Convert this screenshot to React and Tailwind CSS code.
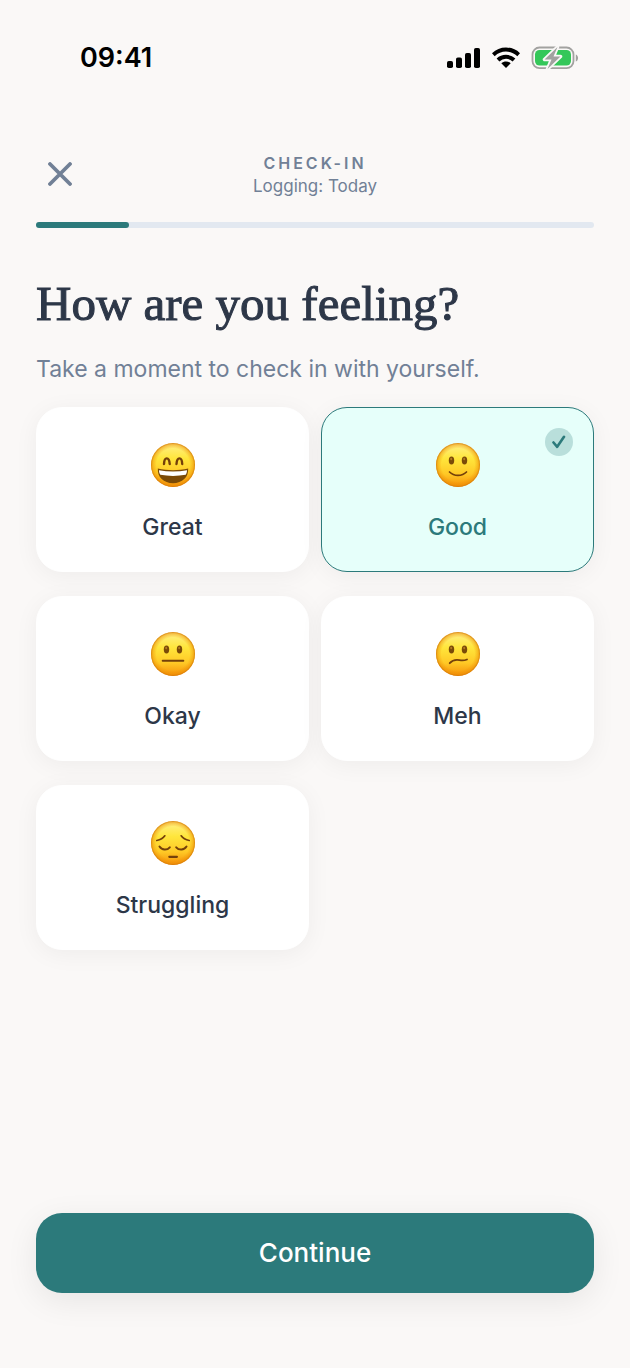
import React, { useState } from 'react';

const moods = [
    { id: 'great', label: 'Great' },
    { id: 'good', label: 'Good' },
    { id: 'okay', label: 'Okay' },
    { id: 'meh', label: 'Meh' },
    { id: 'struggling', label: 'Struggling' },
];

const OpenEyes = () => (
    <>
        <ellipse cx="15.5" cy="17.500" rx="2.700" ry="4" fill="#7a4a08" />
        <ellipse cx="28.5" cy="17.500" rx="2.700" ry="4" fill="#7a4a08" />
        <ellipse cx="15.2" cy="16" rx="1" ry="1.3" fill="#b27a20" />
        <ellipse cx="28.2" cy="16" rx="1" ry="1.3" fill="#b27a20" />
    </>
);

const FaceFeatures = ({ mood }) => {
    const line = { fill: 'none', stroke: '#74400a', strokeLinecap: 'round', strokeLinejoin: 'round' };

    switch (mood) {
        case 'great':
            return (
                <>
                    <path d="M13 21c.3-7.500 5.200-7.500 5.700 0M25.500 21c.5-7.500 5.400-7.500 5.700 0" strokeWidth="2.400" {...line} />
                    <path d="M6.800 25.500c9.500 2.200 21 2.200 30.400 0 .6 8.500-6 14.700-15.200 14.700S6.200 34 6.800 25.500z" fill="#7b4a06" />
                    <path d="M8 27.200c9 1.700 19 1.700 28 0 0 1.700-.5 3.300-1.300 4.600-8 1.500-17.400 1.500-25.400 0-.8-1.300-1.300-2.900-1.300-4.600z" fill="#fff" />
                </>
            );
        case 'good':
            return (
                <>
                    <OpenEyes />
                    <path d="M13.500 29c4.500 4.500 12.500 4.500 17 0" strokeWidth="1.700" {...line} />
                </>
            );
        case 'okay':
            return (
                <>
                    <OpenEyes />
                    <path d="M11.700 28.800h20.600" strokeWidth="2" {...line} />
                </>
            );
        case 'meh':
            return (
                <>
                    <OpenEyes />
                    <path d="M13.700 31.200c3-3.400 6.500-3.600 9.800-3 3 .5 5.300.3 7.500-.7" strokeWidth="1.800" {...line} />
                </>
            );
        default:
            return (
                <>
                    <path d="M5.800 19.500c3.700-.7 6.500-2.500 8-4.700M38.200 19.500c-3.700-.7-6.500-2.500-8-4.700" strokeWidth="1.700" {...line} />
                    <path d="M8.500 25.500c2.500 3.800 7.500 4 10.300.8M35.500 25.500c-2.500 3.800-7.500 4-10.300.8" strokeWidth="2" {...line} />
                    <path d="M18.300 35.800h7.600" strokeWidth="2.200" {...line} />
                </>
            );
    }
};

const Face = ({ mood }) => (
    <svg viewBox="0 0 44 44" className="h-11 w-11" aria-hidden="true">
        <defs>
            <linearGradient id={`${mood}-skin`} x1="0" y1="0" x2="0" y2="1">
                <stop offset="0" stopColor="#fff08a" />
                <stop offset="0.35" stopColor="#ffe63c" />
                <stop offset="0.7" stopColor="#ffc926" />
                <stop offset="1" stopColor="#f58f08" />
            </linearGradient>
            <radialGradient id={`${mood}-rim`}>
                <stop offset="0.75" stopColor="#f08a00" stopOpacity="0" />
                <stop offset="0.92" stopColor="#ea8c05" stopOpacity="0.45" />
                <stop offset="1" stopColor="#d07205" stopOpacity="0.9" />
            </radialGradient>
        </defs>
        <circle cx="22" cy="22" r="22" fill={`url(#${mood}-skin)`} />
        <circle cx="22" cy="22" r="22" fill={`url(#${mood}-rim)`} />
        <FaceFeatures mood={mood} />
    </svg>
);

const StatusBar = () => (
    <div className="flex h-[116px] items-center justify-between pr-[51px] pl-20">
        <span className="text-[27px] leading-8 font-semibold text-black">09:41</span>
        <div className="flex items-center gap-[11px]">
            <svg viewBox="0 0 34 22" className="h-[22px] w-[34px]" aria-hidden="true">
                <rect x="0" y="14" width="6" height="7" rx="1.800" />
                <rect x="9" y="10.500" width="6" height="10.500" rx="1.800" />
                <rect x="18" y="6" width="6" height="15" rx="1.800" />
                <rect x="27" y="1" width="6" height="20" rx="1.800" />
            </svg>
            <svg viewBox="0 0 28 22" className="h-[22px] w-7" aria-hidden="true">
                <g fill="none" stroke="#000" strokeWidth="4">
                    <path d="M1.300 7.700c7.200-6.900 18.200-6.900 25.400 0" />
                    <path d="M6 13c4.500-4.300 11.500-4.300 16 0" />
                </g>
                <path d="M14 21l-4.700-4.700c2.700-2.500 6.700-2.500 9.400 0z" />
            </svg>
            <svg viewBox="0 0 48 24" className="h-6 w-12" aria-hidden="true">
                <rect x="1.500" y="1.500" width="41" height="20.600" rx="7" fill="none" stroke="#a2a2a0" strokeWidth="1.800" />
                <path d="M44.800 8.500c3 1 3 6 0 7z" fill="#a2a2a0" />
                <rect x="4" y="4" width="36" height="15.600" rx="4.500" fill="#34c759" />
                <path d="M26.500 1L13.500 13.500h7L16.500 23l13-12.500h-7z" fill="#a2a2a0" stroke="#faf8f7" strokeWidth="3.500" strokeLinejoin="round" paintOrder="stroke" />
            </svg>
        </div>
    </div>
);

const MoodCard = ({ mood, selected, onSelect }) => (
    <label
        className={`relative flex cursor-pointer flex-col items-center gap-6 rounded-[26px] border pt-[35px] pb-7 shadow-[0_4px_24px_rgba(0,0,0,0.05)] has-focus-visible:ring-2 has-focus-visible:ring-[#2c7a7b] ${
            selected ? 'border-[#2c7a7b] bg-[#e6fffa] text-[#2c7a7b]' : 'border-white bg-white text-[#2d3748]'
        }`}
    >
        <input
            type="radio"
            name="mood"
            value={mood.id}
            checked={selected}
            onChange={() => onSelect(mood.id)}
            className="sr-only"
        />
        <Face mood={mood.id} />
        <span className="text-[23px] leading-8 font-medium">{mood.label}</span>
        {selected && (
            <span className="absolute top-5 right-5 flex h-7 w-7 items-center justify-center rounded-full bg-[#b9dfdb]">
                <svg viewBox="0 0 14 14" className="h-3.5 w-3.5" fill="none" stroke="#2c7a7b" strokeWidth="2.600" strokeLinecap="round" strokeLinejoin="round">
                    <path d="M1.500 7.500l3.700 4.300L12 1.800" />
                </svg>
            </span>
        )}
    </label>
);

const App = () => {
    const [mood, setMood] = useState('good');

    return (
        <div className="flex min-h-screen flex-col bg-[#faf8f7] font-['Inter','Liberation_Sans',sans-serif]">
            <StatusBar />

            <main className="flex flex-1 flex-col px-9 pb-[75px]">
                <header className="grid grid-cols-[48px_1fr_48px] items-center pt-[34px]">
                    <button type="button" aria-label="Close" className="flex h-12 w-12 items-center justify-center">
                        <svg viewBox="0 0 24 24" className="h-6 w-6" fill="none" stroke="#718096" strokeWidth="3.800" strokeLinecap="round">
                            <path d="M2 2l20 20M22 2L2 22" />
                        </svg>
                    </button>
                    <div className="text-center leading-[23px] text-[#718096]">
                        <p className="text-base font-semibold tracking-[3px]">CHECK-IN</p>
                        <p className="text-[17px]">Logging: Today</p>
                    </div>
                </header>

                <div role="progressbar" aria-valuenow={1} aria-valuemin={0} aria-valuemax={6} aria-label="Check-in progress" className="mt-6 h-1.5 rounded-full bg-[#e2e8f0]">
                    <div className="h-full w-1/6 rounded-full bg-[#2c7a7b]" />
                </div>

                <h1
                    id="mood-heading"
                    className="mt-12 font-['Liberation_Serif',serif] text-[49px] leading-14 font-normal text-[#2d3748] [-webkit-text-stroke:1px_#2d3748]"
                >
                    How are you feeling?
                </h1>
                <p className="mt-[21px] text-[23px] leading-8 text-[#718096]">Take a moment to check in with yourself.</p>

                <fieldset aria-labelledby="mood-heading" className="mt-[22px] grid grid-cols-2 gap-x-3 gap-y-6">
                    {moods.map((item) => (
                        <MoodCard key={item.id} mood={item} selected={mood === item.id} onSelect={setMood} />
                    ))}
                </fieldset>

                <button
                    type="button"
                    className="mt-auto h-20 w-full rounded-[26px] bg-[#2c7a7b] text-[26px] leading-8 font-medium text-white shadow-[0_8px_32px_rgba(0,0,0,0.08)]"
                >
                    Continue
                </button>
            </main>
        </div>
    );
};

export default App;
